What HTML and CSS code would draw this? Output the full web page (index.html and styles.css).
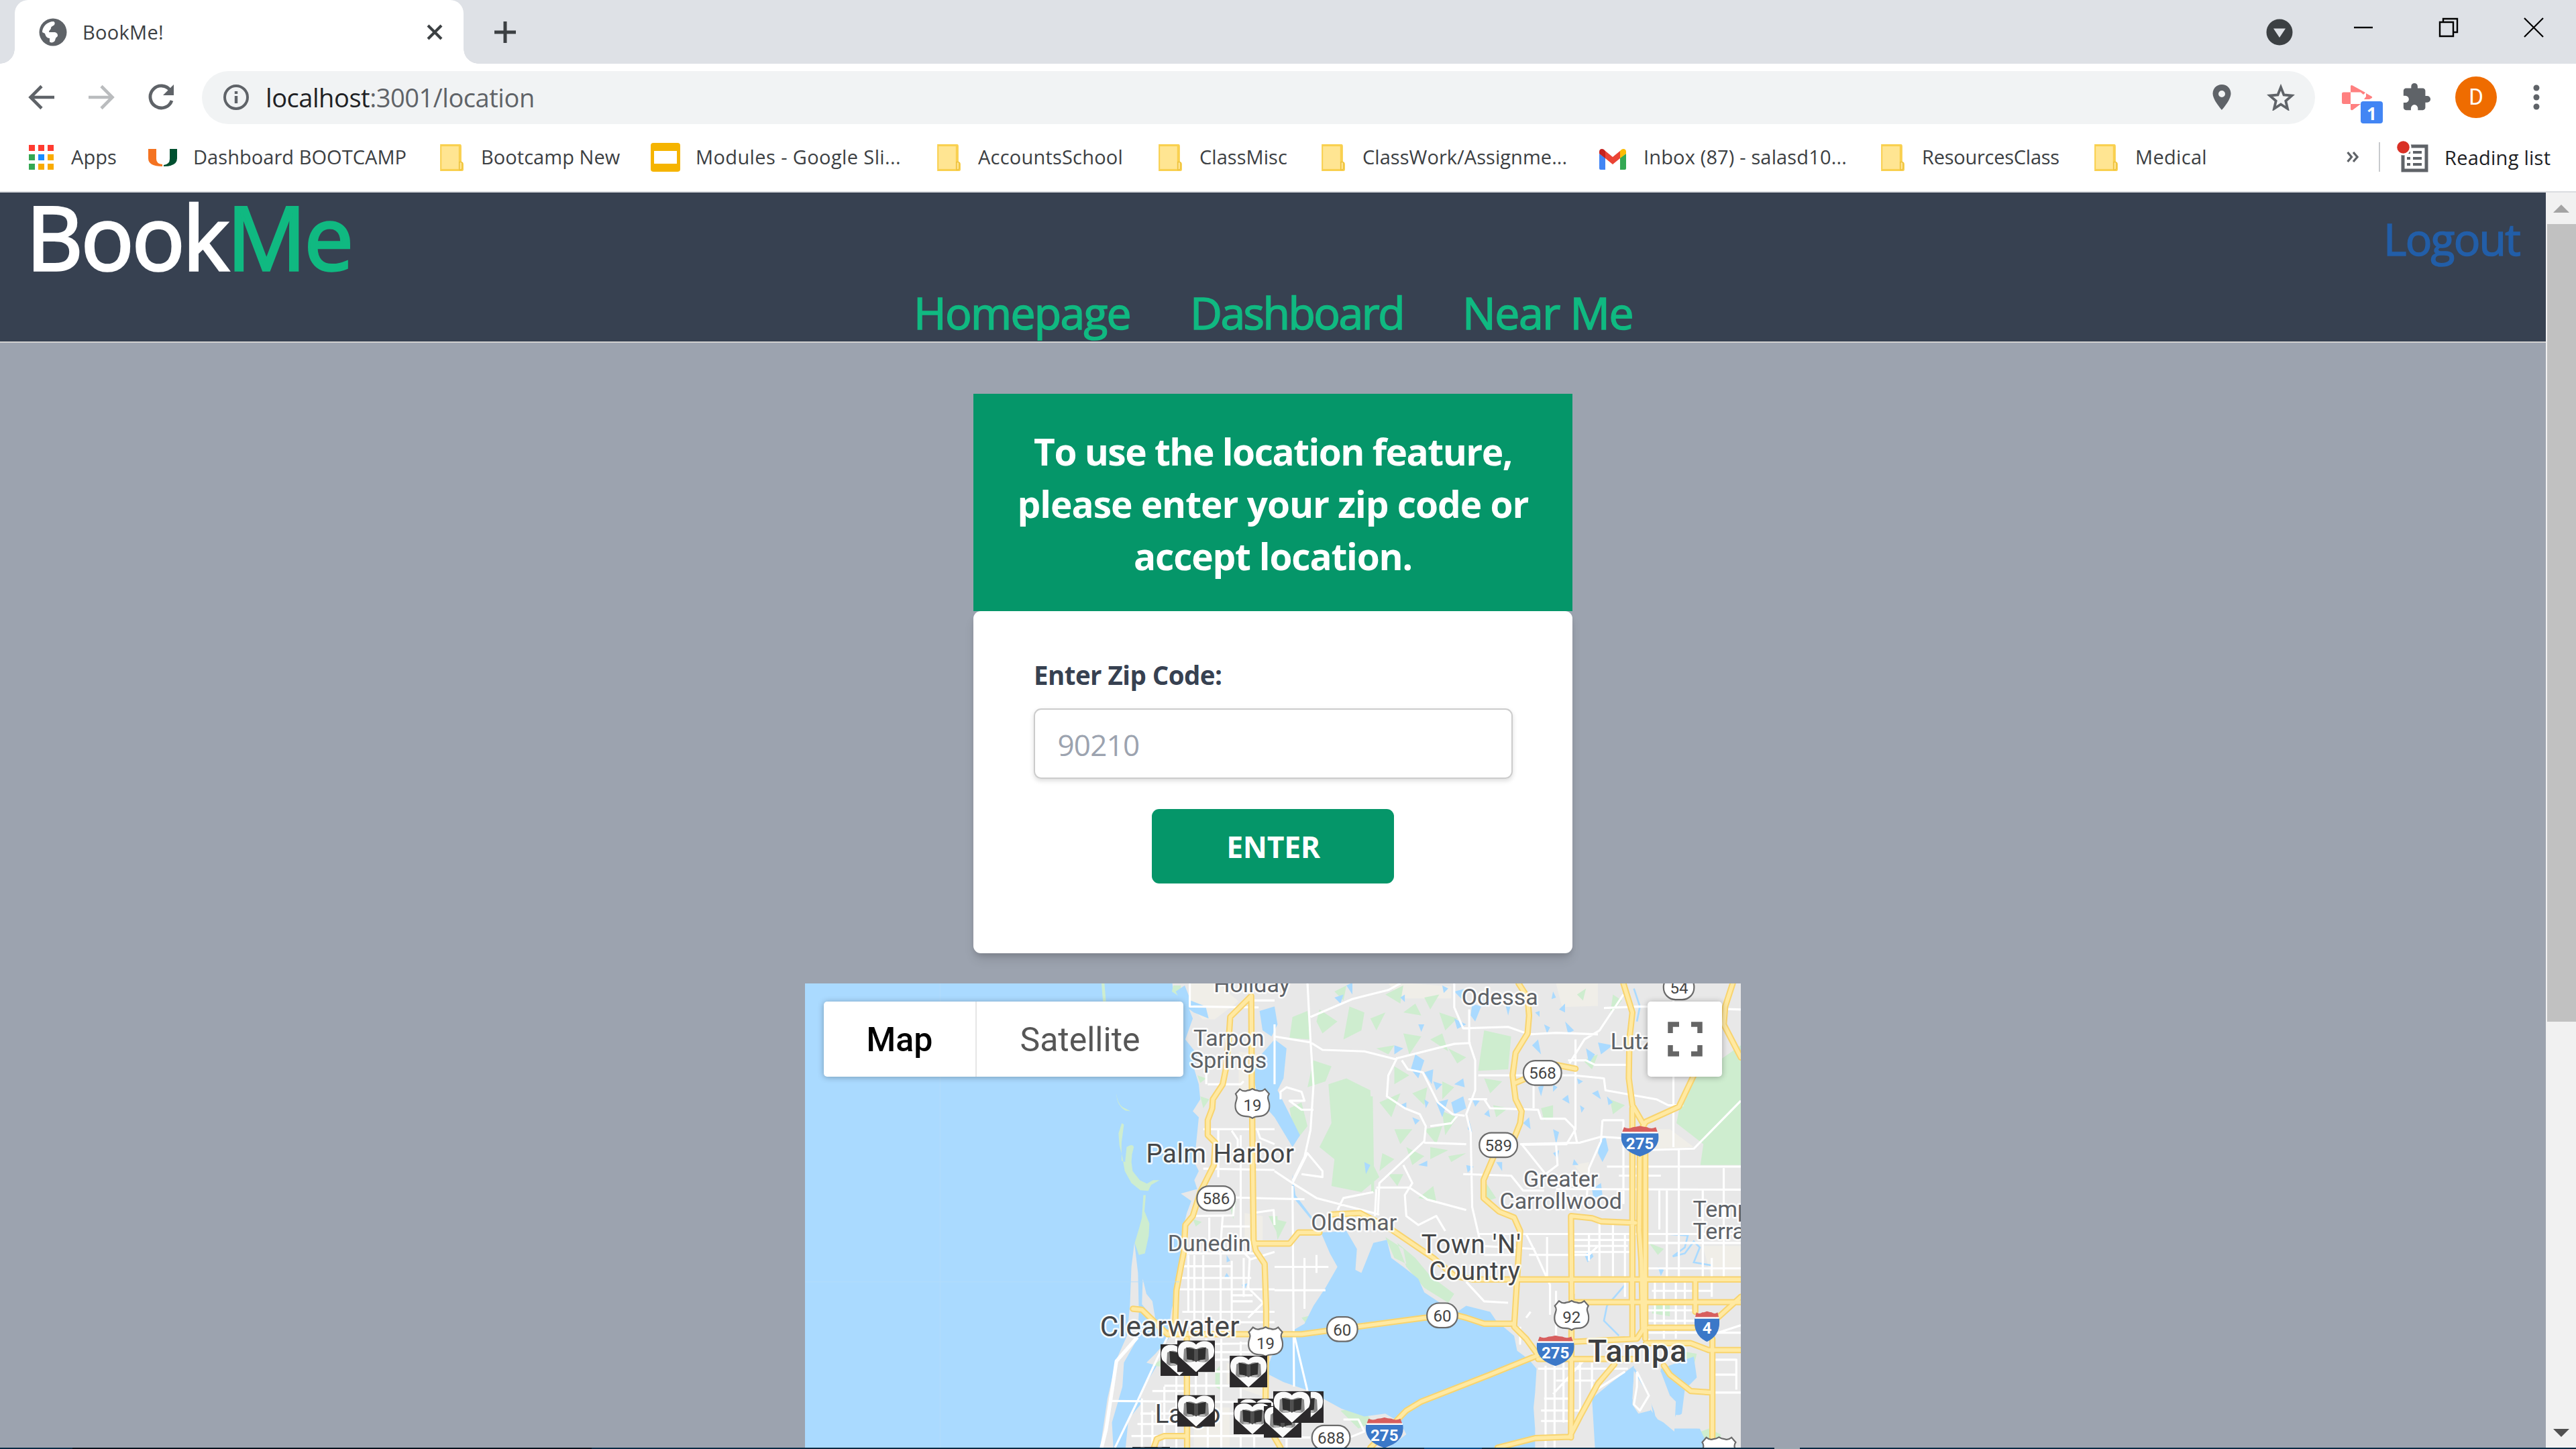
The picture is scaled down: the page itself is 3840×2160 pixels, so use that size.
FILE: index.html
```html
<!DOCTYPE html>
<html lang="en">
<head>
<meta charset="utf-8">
<title>BookMe!</title>
<link rel="stylesheet" href="styles.css">
</head>
<body>
<svg class="defs" width="0" height="0">
  <symbol id="folder" viewBox="0 0 36 42">
    <path d="M2 2h29q2 0 2 3v22q3 1 3 4v8q0 2-3 2H2z" fill="#f9d04f"/>
    <path d="M4 5h25v33H4z" fill="#ffe592"/>
    <path d="M30 28q4-1 4 2v7q0 2-4 2z" fill="#ffe592" stroke="#eec23c" stroke-width="1.5"/>
  </symbol>
</svg>

<header class="chrome">
  <div class="tabstrip">
    <div class="tab">
      <svg class="globe" viewBox="0 0 42 42"><circle cx="21" cy="21" r="20.5" fill="#5f6368"/><path d="M22 5c2 1 2 3 1 5-2 2-5 2-5 5 0 2-3 3-3 6h7c4 0 6 2 6 5 0 2-2 2-3 4-1 3-1 5-4 6-2 1-5 0-5-1v-5c-4 0-6-3-7-7l-4-2C5 13 12 5 22 5z" fill="#fff"/><path d="M33 9c4 4 5 9 4 14-1 5-4 9-8 11 2-3 3-6 3-9 0-4-3-5-5-7 0-2 4-3 5-5 1-1 1-3 1-4z" fill="#5f6368"/></svg>
      <span class="tab-title">BookMe!</span>
      <svg class="tab-close" viewBox="0 0 24 24"><path d="M2 2l20 20M22 2L2 22" stroke="#3c4043" stroke-width="4.2"/></svg>
    </div>
    <svg class="new-tab" viewBox="0 0 34 34"><path d="M17 1v32M1 17h32" stroke="#3c4043" stroke-width="5"/></svg>
    <div class="window-buttons">
      <svg class="tab-search" viewBox="0 0 40 40"><circle cx="20" cy="20" r="19.5" fill="#3c4043"/><path d="M11 14.5h18L20 28z" fill="#dee1e6"/></svg>
      <svg class="wb" viewBox="0 0 30 30"><path d="M1 15h28" stroke="#000" stroke-width="2.4"/></svg>
      <svg class="wb" viewBox="0 0 30 30"><path d="M2 7h20v21H2zM7 7V2h21v20h-6" fill="none" stroke="#000" stroke-width="2.4"/></svg>
      <svg class="wb" viewBox="0 0 30 30"><path d="M1 1l28 28M29 1L1 29" stroke="#000" stroke-width="2.2"/></svg>
    </div>
  </div>

  <div class="toolbar">
    <svg class="nav-icon" viewBox="0 0 40 40"><path d="M39 20H4M20 3.500L3.500 20 20 36.500" fill="none" stroke="#5f6368" stroke-width="4.600"/></svg>
    <svg class="nav-icon" viewBox="0 0 40 40"><path d="M1 20h35M20 3.500L36.500 20 20 36.500" fill="none" stroke="#babcbe" stroke-width="4.600"/></svg>
    <svg class="nav-icon" viewBox="0 0 40 40"><path d="M34 10A16.500 16.500 0 1 0 36 25" fill="none" stroke="#5f6368" stroke-width="4.800"/><path d="M39 1v16H23z" fill="#5f6368"/></svg>
    <div class="omnibox">
      <svg class="info" viewBox="0 0 40 40"><circle cx="20" cy="20" r="17" fill="none" stroke="#5f6368" stroke-width="4"/><path d="M20 18v11M20 11v4" stroke="#5f6368" stroke-width="4.400"/></svg>
      <span class="url"><b>localhost</b>:3001/location</span>
      <svg class="pin" viewBox="0 0 28 38"><path d="M14 0C6 0 .5 6 .5 13.500.5 23 14 38 14 38s13.500-15 13.500-24.500C27.500 6 22 0 14 0zm0 9a5 5 0 1 1 0 10 5 5 0 0 1 0-10z" fill="#5f6368" fill-rule="evenodd"/></svg>
      <svg class="star" viewBox="0 0 42 40"><path d="M21 5l4.500 11.500 12 1-9.200 8L31 37l-10-6.500L11 37l2.700-11.500-9.200-8 12-1z" fill="none" stroke="#5f6368" stroke-width="3.800"/></svg>
    </div>
    <div class="extension">
      <svg viewBox="0 0 64 60"><path d="M3 11.500h13V29H5.500Q3 29 3 26.500V13.500q0-2 2.500-2z" fill="#ff8080"/><path d="M16 3q0-3 3-1.500L38 12l-3 3-4-3.500H16zM39 13l8 4.500q2.500 1.500 0 3L44 22h-8l3-4zM16 29h15L19 38q-3 1-3-1.500z" fill="#ff8080"/></svg>
      <span class="badge">1</span>
    </div>
    <svg class="puzzle" viewBox="0 0 24 24"><path d="M20.500 11H19V7c0-1.100-.9-2-2-2h-4V3.500a2.500 2.500 0 0 0-5 0V5H4c-1.100 0-2 .9-2 2v3.800h1.500a2.700 2.700 0 0 1 0 5.400H2V20c0 1.100.9 2 2 2h3.800v-1.500a2.700 2.700 0 0 1 5.400 0V22H17c1.100 0 2-.9 2-2v-4h1.500a2.500 2.500 0 0 0 0-5z" fill="#5f6368"/></svg>
    <span class="avatar">D</span>
    <svg class="dots" viewBox="0 0 12 38"><g fill="#5f6368"><circle cx="6" cy="5" r="4.500"/><circle cx="6" cy="19" r="4.500"/><circle cx="6" cy="33" r="4.500"/></g></svg>
  </div>

  <nav class="bookmarks">
    <a class="bm apps"><svg viewBox="0 0 45 45"><g fill="#ff3b30"><path d="M2 4h9v9H2zM16 4h9v9h-9zM30 4h9v9h-9z"/></g><path d="M2 18h9v9H2zM2 32h9v9H2z" fill="#34a853"/><path d="M16 18h9v9h-9z" fill="#1a8cff"/><path d="M30 18h9v9h-9zM16 32h9v9h-9zM30 32h9v9h-9z" fill="#f9ab00"/></svg><span>Apps</span></a>
    <a class="bm brand boot"><svg viewBox="0 0 45 45"><path d="M1 10h12v15q0 7 9 8v3Q1 36 1 24z" fill="#f47321"/><path d="M33 10h11v14q0 12-20 12v-2q9-1 9-9z" fill="#005030"/></svg><span>Dashboard BOOTCAMP</span></a>
    <a class="bm new"><svg class="fold"><use href="#folder"/></svg><span>Bootcamp New</span></a>
    <a class="bm brand slides"><svg viewBox="0 0 45 45"><rect x="1" y="1" width="44" height="43" rx="4" fill="#f5b400"/><path d="M6 13h34v19H6z" fill="#fff"/></svg><span>Modules - Google Sli...</span></a>
    <a class="bm acc"><svg class="fold"><use href="#folder"/></svg><span>AccountsSchool</span></a>
    <a class="bm misc"><svg class="fold"><use href="#folder"/></svg><span>ClassMisc</span></a>
    <a class="bm work"><svg class="fold"><use href="#folder"/></svg><span>ClassWork/Assignme...</span></a>
    <a class="bm brand inbox"><svg viewBox="0 0 45 45"><path d="M2 17l9 6v18H4q-2 0-2-2z" fill="#4285f4"/><path d="M33 23l9-6v22q0 2-2 2h-7z" fill="#34a853"/><path d="M11 13l11 9 11-9v11l-11 9-11-9z" fill="#ea4335"/><path d="M2 17v-3c0-4 4-5 7-3l2 2v11z" fill="#c5221f"/><path d="M42 17v-3c0-4-4-5-7-3l-2 2v11z" fill="#fbbc04"/></svg><span>Inbox (87) - salasd10...</span></a>
    <a class="bm res"><svg class="fold"><use href="#folder"/></svg><span>ResourcesClass</span></a>
    <a class="bm med"><svg class="fold"><use href="#folder"/></svg><span>Medical</span></a>
    <svg class="more" viewBox="0 0 18 16"><path d="M1.500 1l6 7-6 7M10 1l6 7-6 7" fill="none" stroke="#5f6368" stroke-width="3.200"/></svg>
    <span class="rule"></span>
    <a class="reading"><svg viewBox="0 0 48 48"><path d="M9 8h35v36H9z" fill="none" stroke="#5f6368" stroke-width="5"/><path d="M24 17h13M24 26h13M24 35h13M15 26h5M15 35h5M15 17h5" stroke="#5f6368" stroke-width="4"/><circle cx="9.500" cy="9.500" r="12" fill="#fff"/><circle cx="9.500" cy="9.500" r="9.300" fill="#d93025"/></svg><span>Reading list</span></a>
  </nav>
</header>

<div class="viewport">
  <div class="page">
    <header class="site-header">
      <div class="brand-row">
        <h1 class="logo">Book<em>Me</em></h1>
        <a class="logout">Logout</a>
      </div>
      <nav class="site-nav">
        <a class="home">Homepage</a>
        <a class="dash">Dashboard</a>
        <a class="near">Near Me</a>
      </nav>
    </header>
    <main class="content">
      <h2 class="notice"><span class="line-1">To use the location feature,</span><span class="line-2">please enter your zip code or</span><span class="line-3">accept location.</span></h2>
      <form class="card">
        <label>Enter Zip Code:</label>
        <div class="field">90210</div>
        <button type="button">ENTER</button>
      </form>
      <section class="map">
        <svg class="map-canvas" viewBox="0 13 3125 1551" preserveAspectRatio="none">
          <defs>
            <symbol id="book" viewBox="0 0 168 142"><path d="M0 0h168v142H0z" fill="#2b292b"/><path d="M84 141L8 72C-6 38 8 3 44 3c20 0 33 6 40 16C91 9 104 3 124 3c36 0 50 35 36 69z" fill="#fafafa"/><path d="M30 38q26-18 54 2 30-20 54-2l3 48q-10 14-30 10-16 2-27-8-11 10-27 8-20 4-30-10z" fill="#8a8a8a"/><path d="M40 31l37 8v52l-34-8zM128 31l-37 8v52l34-8z" fill="#2f2f2f"/><path d="M77 38h14v54l-7 5-7-5z" fill="#505050"/><ellipse cx="56" cy="91" rx="13" ry="5" fill="#b5b5b5"/><ellipse cx="112" cy="91" rx="13" ry="5" fill="#b5b5b5"/></symbol>
            <symbol id="us" viewBox="0 0 120 104"><path d="M18 4Q30 14 42 9q10-1 18-6 8 5 18 6 12 5 24-5l14 16c-8 12-3 18 0 30 6 30-14 45-34 45q-14 0-22 6-8-6-22-6C18 95-2 80 4 50c3-12 8-18 0-30z" fill="#fff" stroke="#6b6b6b" stroke-width="5"/></symbol>
            <symbol id="inter" viewBox="0 0 126 102" preserveAspectRatio="none"><path d="M2 22h122c8 38-14 66-61 80C16 88-6 60 2 22z" fill="#3b78c8"/><path d="M10 4q14 8 30 0 12 0 23-4 11 4 23 4 16 8 30 0l6 16H4z" fill="#d75f5f"/><path d="M2 20h122v5H2z" fill="#fff"/></symbol>
            <path id="hw" d="M1490 55L1420 125l-5 75-10 100-10 50-33 50-2 30-15 40v50l25 25-5 75-45 90-25 80-25 30-5 90-10 50-15 80-4 110-21 35M1490 55l2 285 6 530 7 35 30 45 5 150v100l-2 200M1095 1100l30 3 85 82h448l410-55 110-8 30 8 60 20h100M1275 1200l1 364M1165 1564l10-29 25-10h76M1500 882h118l30-37h70M1758 785l95-5 105 55 140 95 70 60 60 12h897M2383 13l30 47 5 60-5 60-40 65-10 75 10 80 20 40-5 40-20 50-55 30-47 110v60l52 45 50 20 20 45-10 160-10 160 40 40 40 55M2373 345l35-15M2508 285l65 13M3098 13l-25 77-5 60 57 110M2733 13l30 97-10 90-2 130 12 90 35 60M2968 320l-50 105-110 50-15 25M2763 430v770M2788 560l-2 280 7 100 5 230-20 30-210 10M2806 500v700M2558 790l70 7 30 11 115 5M2558 790l2 270-2 470M2568 1078h557M2818 1163h150M3125 1060l-77 70M2973 1002v108M2808 1215h150l60 23h107M3030 1200v364M2868 1290l20 30 70 55 72 5M2448 1255l-160 65-230 90-50 30-120 124M2703 1285l-55 65-60 110-35 68-115 4-125 32M2448 1268h320M2761 1002v78M1568 1530l20 34"/>
          </defs>
          <path class="water" d="M0 0h3125v1570H0z"/>
          <path class="land" d="M1225 0l5 40 45 40 20 50-25 70 40 50-10 50 15 50 5 50-25 40 20 20-10 100-10 40 20 40-15 30 10 30-55 15 35 25-15 40-10 40-10 60 5 40-15 60-10 80-10 40-10 60v40l-45 50-30 30 35 10-55 90v40l-40 50-10 100h2060V0zM1100 880l12 100 3 130-5 90-45 80-5 80-35 120 5 90h-45l25-170 30-130 35-80 10-100 5-130zM1128 1000l12 50 20 25 10 60-20-20-25-30z"/>
          <path class="green" d="M990 13h10l5 60h-10zM1040 380q2 32 20 46l28 14-18-2q-30-18-30-58zM1058 480l7 5-8 60v60l12 5 5-50q20-14 24 0l-6 24-2 26 4 30 24 30 24 12 20-12 22 0-28 16-10 20-26-2-30-24-22-40-8-46-10-40-3-40zM1130 720h8l-4 50-10 40zM1132 770l18 45-2 40-13 60-20 5-14-40 15-50zM1230 20h25v40l-30-20zM1160 1290l50-35v40zM1310 320l30 10-20 15zM1320 390l30 10-20 30zM1295 800l30 10-20 15zM1370 1310l15-20v80l-15-10zM1420 760l20-20-10 60z"/>
          <g transform="translate(1568 0)">
            <path class="beige" d="M380 13h80l130 10v40H420zM940 13h140v75l-120 4zM1250 500h70l80 60-130 5zM1430 890h127v100h-100zM1000 620l50-10-10 60zM-280 13h90l70 60-80 60h-40l-40-40zM-120 240l60 10v160l-60-20zM-100 780l60 10v100h-60zM-160 1280l140 60v60l-140-50zM-270 1430h120v130h-120z"/>
            <path class="green" d="M180 350l60-20 80 40 10 250 20 40-60 50-100-20 10-90-50-40 40-80zM60 125l50-20 10 95-70-5zM700 170l90 20-10 110-100 5 10-70zM1400 330l157-110v400h-135l10-70-90-70 10-50zM150 100l60 40-50 40-20-40zM250 90l50 20-10 60-60 30zM370 50l60-30-10 60zM500 60l50-10-30 50zM550 110l60 20-40 40zM130 270l60 20-20 50-60 20zM340 230l60-10-20 30zM430 110l40-30 20 40zM350 410l70-30-30 80zM580 230l60 30-30 20zM500 500l60-10-20 60zM520 560l60 10-60 30zM440 560l60 30-40 30zM360 580l40 20-50 40zM580 590l60-10-50 30zM480 730l50-40 10 50zM700 670l40 60-30 10zM750 540l30 30-40-10zM890 430l40-10v40l-30 10zM1030 270l50-20-20 50zM1120 400l50 20-40 30zM1010 50l30-20-10 40zM1130 50l30 20-40 50zM410 880l60 50 50 60 80 60-20 30-80-50-60-70zM370 860l30 70 40 20-10-50zM220 1440l70-10 40 50-50 20zM90 1130l60-15-40 40zM1250 880l50 20-20 20zM1270 1070l50 15v40l-60-10zM1350 1240l60 10-10 40zM1400 1520l50-20 40 20v44h-80zM0 300l20-40 10 60zM50 430l40-20 20 80-40 50zM0 800l40 10-30 60zM320 390l8 0 5 320h-10zM200 40l40-20-10 50zM320 130l50-20-30 60zM430 180l60 10-40 60zM520 200l40-20 20 60zM400 290l50 30-50 30zM460 380l50-20-10 60zM560 340l40 20-40 40zM400 500l60 0-40 50zM700 330l60 10-40 40zM730 420l50 10-40 30zM560 440l50 20-40 60zM380 650l50 0-20 40zM-20 790l30 0 0 60z"/>
            <path class="water" d="M155 845l30 70 25 45-40 70-40 60-30 60-70 40-40 70-20 54 60 31 82 28 112 61 76 26 70-10 50 30 20 40-60 44h490v-64l-5-70 5-50 5-80-25-30-40-30-10-50-60-50-20-30-80-20-30 20-50-25-60-40-20-45-50-40-40-30-15-60-45 10-20 50-20 50-20-10 5-70-35-60zM1070 1564l-10-164 60-50 80-60v30l-5 80 15 40 40-10 30 40 40 20 100 10 30 64zM1290 1300l110-40 10 70-40 40-10 80-30 20-50-90zM0 200l40 30-10 100-20 40 40 80 35 70-25 40-60-100-53-60-20-80 20-60zM-50 105l50-15 10 60-20 40-30-20zM-330 40l30-20 20 50 50 20 10 40-50-20-40-30z"/>
            <path class="water" d="M600 40l40-10-10 40zM660 80l30 10-20 50-15-20zM200 60l30-10-10 30zM240 20l20-10v40zM470 250l30 20-20 60-25-30zM400 220l30 10-30 20zM500 310l30-10-5 50zM540 410l40-10-20 60zM590 410l40-20 10 40-40 20zM530 340l30 10-20 20zM600 350l30-20 5 30zM690 90l15-30 10 30zM770 80l20 0-10 40zM860 220l20-20 10 50zM880 360l20-10-10 40zM950 100l20-20v30zM970 140l30 30-20 10zM900 150l20 10-10 20zM1080 210l50 10-40 30zM1040 230l30 20-20 30zM830 480l20-20 5 40zM930 500l20 10-10 40zM960 400l20-15 5 30zM1060 380l20-10 10 30zM1110 390l20 20-15 10zM1085 540l20-15 10 45-20 40-15-30zM1060 700l30-20 5 40-30 10zM650 470l10 40-15-10zM640 620l25 5-20 20zM480 620l30-15v20zM300 610l20 10-15 30zM1035 920l20-15 10 20-20 20zM930 580l20-10-5 30zM1000 600l15 20-20 0zM60 650l10 70 60 80-5 5-65-80zM740 610l20 0v30zM1280 960l20 10-10 20zM600 130l40 20-30 15zM-160 980l10 15-20 5zM-110 1020l20-5-10 20zM-160 920l12 20-12 5zM420 60l15-10v25zM560 20l20 10-15 15zM480 150l20 0-10 25zM420 420l20-10v25zM460 460l25 10-15 15zM500 400l15 10-10 20zM660 400l25 5-15 20zM700 450l15-15 5 25zM900 290l20 0-10 15zM930 350l15 10-15 15zM1010 330l20 10-15 10zM1020 420l15 10-10 15zM870 110l15-5v20zM930 40l10 20-15 5z"/>
            <path class="stream" d="M1310 850l70 5-10 40-40 30 40-10 30-40 20 20-20 50 60 10M1170 1020l-60 70-10 50 50 50M1200 1300l60 110 10 60M1200 30l20 60-10 50"/>
            <path class="land" d="M1200 1310l50 80 5 50-40 10-20-30zM1290 1310l30 80 20 20-5 100-60-50-40-100zM1340 1455h110v45h-125z"/>
          </g>
          <path class="minor" d="M1285 0v90l230 3M1345 350h110l10-10M1340 310v40M1330 500h238M1380 500v160M1455 520v380M1330 632l238 4M1300 790l130-2 5-60 133 4M1260 915h240M1280 920v190M1300 920v240M1330 920v240M1388 915v250M1425 940v220M1465 930v130M1250 958h175M1250 997h240M1245 1035h323M1425 1055h70M1425 1075h70M1260 1110h308M1270 1145h298M1395 825h90M1395 790l-10 130M1568 910l-80 25-30-30M1485 930l-5 100 60 60M1480 1130l60-60M1350 795v110M1425 505l20 30v50M1510 500l10 30 48 20M1495 780l70-10 3 50M1568 350v-200M1500 70h68M1210 1195L1165 1290l-60 130-70 144M1210 1220l320-5M1240 1245h330M1240 1270h300M1220 1310h320M1200 1357h340M1160 1375h110M1120 1450h450M1110 1485h160M1090 1525h478M1020 1408l570 5M1240 1200v364M1340 1200v200M1390 1200v364M1345 1420v144M1305 1210v190M1455 1210v354M1125 1400v164M1160 1440v124M1200 1360v200M1500 1420v144"/>
          <path class="beachroad" d="M1110 1195l-70 80-15 100-20 130-15 60"/>
          <path class="minor" transform="translate(1568 0)" d="M110 13l10 190 10 150-10 150-20 90-40 80M0 190l120 20 40 25 140 5 100 25 200-50 55-3M120 125l140-60 120-30 40-22M410 260l-30 60-5 70 60 40 50 20 20 40-5 50-150 140-5 100M425 270l20 30 50 10 50 100 50 40 40 5M600 13v80l30 70 150-5 70 25 90-5 140 5M650 100v110l20 60v100l-30 80 15 60 5 250 30 130 180 10M520 490l70-10 20-25M500 545l140 5M340 695h110l60 40 130 35M430 620l30 60-25 40 5 70 40 30 60-30 30 50M210 770l20-40 100-20M0 640l60 40 80 50 210 55M60 690l5 670M0 732l100 2M60 680l50-100 50 60v20l-70-10M680 320h320l100 10 5 40 170 30 40 20h50M710 400h-60l50 0 20 30 160 5 10 30h80l30 30 10 50M1165 50l-80 120-50 30-50 80M1005 200v300l-30 50-140 2M865 350v80M1100 95l120-5 337 10M980 270h60l30 15h120M1332 60v500M820 550l200-5 70-20 70 5M1095 470h70v280M1095 470l-5 70-40 90-10 130M940 550l5 70-40 30-80-100M630 650l160 5 40 50h70M1110 625h447M1150 655l140 0M1240 570l160-5 157-160M940 700l617 2M1310 700v300M1350 570v440M1285 705v130M1500 630v370M1430 700v300M820 850h737M1000 870h200M1000 890h180M1000 910h190M840 850l30 60 50 110v100M910 860v140M850 920h200l30-30M1050 850v90M1085 810v190M1130 810v190M1170 850v210M1240 880h317M1240 965h317M1260 1040h200M1270 1010v150M1300 1010v190M1340 1010v190M1370 1010v150M1460 930v130M1240 1105h170M1240 1140h180M1240 1180h317M1250 1200v80M1480 1180l77-25M640 1010l60 65 80 5M680 850h130M700 920h110M340 700l-5 90M0 1038h170M0 960h180M100 930v170M140 920v60M65 1185l45 190M880 1300h300M940 1340h130M900 1400h90M890 1440h150M890 1475h100M905 1290v274M935 1280v284M965 1280v200M1020 1270v190M1060 1280v90M1040 1265l-110 120M1170 1310l-110 70M1210 1310v50l-10 60 20 20 30-50-40-80M1462 1270h80v100M1470 1320h70M1470 1380h87M820 1160v60M840 1130l15-20M940 1040v150M1000 1050v-40M230 1470l50 0 20 40-50 20M40 1480v84M0 1530h120M20 400l0-25 20-15 50 15 10 30-50 0 40 30 40 0"/>
          <use href="#hw" class="casing"/>
          <use href="#hw" class="core"/>
          <path class="seam" d="M451 13v1551M0 1010h1250"/>
          <g class="shields">
            <use href="#us" x="1434" y="362" width="120" height="104"/>
            <use href="#us" x="1478" y="1158" width="120" height="104"/>
            <use href="#us" x="2500" y="1070" width="120" height="104"/>
            <use href="#us" x="2992" y="1526" width="120" height="104"/>
            <rect x="1309" y="690" width="127" height="82" rx="40"/>
            <rect x="2867" y="-15" width="102" height="82" rx="40"/>
            <rect x="2399" y="271" width="127" height="82" rx="40"/>
            <rect x="2252" y="512" width="127" height="82" rx="40"/>
            <rect x="1743" y="1127" width="102" height="82" rx="40"/>
            <rect x="2077" y="1081" width="102" height="82" rx="40"/>
            <rect x="1693" y="1490" width="127" height="82" rx="40"/>
            <use href="#inter" x="2725" y="489" width="126" height="102"/>
            <use href="#inter" x="2443" y="1189" width="126" height="102"/>
            <use href="#inter" x="1872" y="1463" width="126" height="102"/>
            <use href="#inter" x="2970" y="1108" width="84" height="102"/>
          </g>
          <g class="route">
            <text x="1494" y="438">19</text><text x="1538" y="1235">19</text><text x="2560" y="1147">92</text>
            <text x="1373" y="751">586</text><text x="2919" y="46">54</text><text x="2463" y="332">568</text><text x="2316" y="573">589</text>
            <text x="1794" y="1189">60</text><text x="2128" y="1142">60</text><text x="1757" y="1551">688</text>
          </g>
          <g class="route inter">
            <text x="2788" y="567">275</text><text x="2506" y="1267">275</text><text x="1935" y="1541">275</text><text x="3012" y="1184">4</text>
          </g>
          <g class="town">
            <text x="1492" y="42">Holiday</text><text x="2320" y="85">Odessa</text>
            <text x="1415" y="221">Tarpon</text><text x="1414" y="295">Springs</text><text class="from" x="2690" y="233">Lutz</text>
            <text x="1350" y="907">Dunedin</text><text x="1833" y="837">Oldsmar</text>
            <text x="2524" y="692">Greater</text><text x="2524" y="767">Carrollwood</text>
            <text class="from" x="2965" y="792">Temple</text><text class="from" x="2965" y="867">Terrace</text>
          </g>
          <g class="city">
            <text x="1386" y="611" textLength="494">Palm Harbor</text>
            <text x="2224" y="915" textLength="332">Town 'N'</text><text x="2236" y="1004" textLength="304">Country</text>
            <text x="1278" y="1480">Largo</text>
          </g>
          <text class="big" x="1218" y="1191" textLength="466">Clearwater</text>
          <text class="metro" x="2779" y="1276" textLength="330">Tampa</text>
          <g>
            <use href="#book" x="1187" y="1218" width="126" height="106"/><use href="#book" x="1243" y="1206" width="126" height="106"/>
            <use href="#book" x="1418" y="1257" width="126" height="106"/><use href="#book" x="1243" y="1388" width="126" height="106"/>
            <use href="#book" x="1445" y="1400" width="126" height="106"/><use href="#book" x="1431" y="1414" width="126" height="106"/>
            <use href="#book" x="1532" y="1425" width="126" height="106"/><use href="#book" x="1606" y="1375" width="126" height="106"/>
            <use href="#book" x="1563" y="1375" width="126" height="106"/><use href="#book" x="1093" y="1561" width="126" height="106"/>
          </g>
        </svg>
        <div class="map-type"><span class="active">Map</span><span>Satellite</span></div>
        <div class="fullscreen"><svg viewBox="0 0 52 52"><path d="M4 17V4h13M35 4h13v13M48 35v13H35M17 48H4V35" fill="none" stroke="#666" stroke-width="7.500"/></svg></div>
      </section>
    </main>
  </div>
  <aside class="scrollbar">
    <svg class="arrow" viewBox="0 0 24 12"><path d="M0 12L12 0l12 12z" fill="#a3a3a3"/></svg>
    <span class="thumb"></span>
    <svg class="arrow down" viewBox="0 0 24 12"><path d="M0 0l12 12L24 0z" fill="#505050"/></svg>
  </aside>
</div>
<div class="taskbar"></div>
</body>
</html>
```
FILE: styles.css
```css
* { box-sizing: border-box; }
body { margin: 0; width: 3840px; height: 2160px; overflow: hidden; display: flex; flex-direction: column; font-family: "Open Sans", "Noto Sans", sans-serif; }
svg { display: block; flex: none; }
.defs { position: absolute; }
span, a { white-space: nowrap; }

/* browser frame */
.chrome { flex: none; height: 287px; background: #fff; border-bottom: 2px solid #dadce0; }
.tabstrip { height: 95px; background: #dee1e6; display: flex; align-items: center; padding-left: 22px; }
.tab { position: relative; width: 669px; height: 95px; background: #fff; border-radius: 20px 20px 0 0; display: flex; align-items: center; padding-left: 36px; }
.tab::before, .tab::after { content: ""; position: absolute; bottom: 0; width: 22px; height: 22px; }
.tab::before { left: -22px; background: radial-gradient(circle at 0 0, transparent 21.500px, #fff 22px); }
.tab::after { right: -22px; background: radial-gradient(circle at 100% 0, transparent 21.500px, #fff 22px); }
.globe { width: 42px; height: 42px; }
.tab-title { width: 513px; margin-left: 23px; font-size: 29px; letter-spacing: .3px; color: #3c4043; }
.tab-close { width: 24px; height: 24px; }
.new-tab { width: 34px; height: 34px; margin-left: 45px; }
.window-buttons { margin-left: auto; display: flex; padding-right: 48px; }
.tab-search { width: 40px; height: 40px; margin: 0 90px 0 0; }
.wb { width: 30px; height: 30px; margin-right: 97px; margin-top: -2px; }
.wb:last-child { margin-right: 0; }

.toolbar { height: 99px; display: flex; align-items: center; padding-left: 42px; }
.toolbar > * { flex: none; }
.nav-icon { width: 40px; height: 40px; margin-right: 49px; }
.omnibox { width: 3150px; height: 79px; margin-left: -8px; margin-top: 1px; background: #f1f3f4; border-radius: 40px; display: flex; align-items: center; padding-left: 31px; }
.info { width: 40px; height: 40px; }
.url { flex: none; width: 2902px; margin-left: 24px; font-size: 38px; line-height: 79px; letter-spacing: -.450px; color: #5f6368; }
.url b { font-weight: 400; color: #202124; }
.pin { width: 28px; height: 38px; }
.star { width: 42px; height: 40px; margin-left: 53px; }
.extension { position: relative; width: 64px; height: 60px; margin: 22px 0 0 37px; }
.extension svg { width: 64px; height: 60px; }
.badge { position: absolute; left: 31px; top: 25px; width: 33px; height: 33px; border-radius: 4px; background: #4285f4; color: #fff; font: 700 26px/36px "Noto Sans", sans-serif; text-align: center; }
.puzzle { width: 46px; height: 46px; margin-left: 27px; }
.avatar { width: 62px; height: 62px; margin-left: 35px; border-radius: 50%; background: #ef6c00; color: #fff; font: 33px/62px Roboto, sans-serif; text-align: center; }
.dots { width: 12px; height: 38px; margin-left: 53px; }

.bookmarks { height: 80px; display: flex; align-items: center; padding-left: 41px; }
.bm { display: flex; align-items: center; gap: 20px; margin-right: 42px; font-size: 29px; line-height: 40px; letter-spacing: .05px; color: #3c4043; }
.bm.brand { gap: 23px; margin-right: 43px; }
.bm svg { width: 45px; height: 45px; }
.bm .fold { padding: 1px 6px 1px 2px; }
.apps span { width: 72px; }
.boot span { width: 321px; }
.new span { width: 210px; }
.slides span { width: 313px; letter-spacing: .39px; }
.acc span { width: 223px; letter-spacing: .21px; }
.misc span { width: 136px; }
.work span { width: 309px; letter-spacing: .05px; }
.inbox span { width: 307px; letter-spacing: .15px; }
.res span { width: 211px; letter-spacing: -.25px; }
.med span { width: 315px; letter-spacing: .32px; }
.med { margin-right: 0; }
.more { width: 18px; height: 16px; }
.rule { width: 2px; height: 44px; margin-left: 30px; background: #c8cacd; }
.reading { display: flex; align-items: center; margin-left: 25px; font-size: 29px; letter-spacing: .25px; color: #202124; }
.reading svg { width: 48px; height: 48px; margin-right: 23px; }

/* web page */
.viewport { flex: 1; display: flex; min-height: 0; }
.page { width: 3795px; background: #9ca3af; }
.site-header { height: 224px; background: #374151; border-bottom: 2px solid #d1d1d1; }
.brand-row { display: flex; justify-content: space-between; height: 130px; padding: 0 39px 0 39px; }
.logo { margin: 0; font-size: 131px; line-height: 130px; font-weight: 400; letter-spacing: -2.900px; color: #fff; -webkit-text-stroke: 3.500px currentColor; }
.logo em { font-style: normal; color: #10b981; }
.logout { font-size: 66px; line-height: 137px; letter-spacing: -1.780px; color: #225ea8; -webkit-text-stroke: 1.600px currentColor; }
.site-nav { display: flex; padding-left: 1362px; font-size: 66px; line-height: 96px; color: #10b981; -webkit-text-stroke: 1.600px currentColor; }
.home { width: 412px; letter-spacing: -1.690px; }
.dash { width: 406px; letter-spacing: -2.510px; }
.near { letter-spacing: -1.420px; }
.content { display: flex; flex-direction: column; align-items: center; padding-top: 76px; }
.notice { width: 893px; height: 324px; margin: 0; padding-top: 47px; background: #059669; color: #fff; font-size: 55px; line-height: 78px; font-weight: 700; display: flex; flex-direction: column; align-items: center; }
.line-1 { letter-spacing: -1.500px; }
.line-2 { letter-spacing: -1.040px; }
.line-3 { letter-spacing: -1.200px; }
.card { width: 893px; height: 510px; padding: 75px 90px 0; background: #fff; border-radius: 11px; box-shadow: 0 11px 17px -3px rgba(0,0,0,.12), 0 5px 7px -1px rgba(0,0,0,.1); display: flex; flex-direction: column; align-items: center; }
.card label { width: 100%; font-size: 38.500px; line-height: 40px; font-weight: 700; letter-spacing: -.550px; color: #374151; }
.field { width: 714px; height: 105px; margin-top: 30px; padding: 2px 0 0 34px; border: 2px solid #ccc; border-radius: 11px; box-shadow: 0 3px 7px rgba(0,0,0,.14); font-size: 44px; line-height: 101px; letter-spacing: -.8px; color: #9ca3af; }
.card button { width: 361px; height: 111px; margin-top: 45px; border: 0; border-radius: 11px; background: #059669; color: #fff; font: 700 44.500px/111px "Open Sans", sans-serif; letter-spacing: -.3px; padding: 0 0 0 1px; }
.map { position: relative; width: 1395px; height: 692px; margin-top: 45px; overflow: hidden; }
.map-canvas { width: 1395px; height: 692px; }
.map-type { position: absolute; left: 28px; top: 27px; width: 536px; height: 112px; display: flex; background: #fff; border-radius: 5px; box-shadow: 0 1px 10px rgba(0,0,0,.3); font: 50px/115px Roboto, sans-serif; color: #565656; text-align: center; }
.map-type span { flex: 1; }
.map-type .active { flex: none; width: 228px; border-right: 2px solid #e6e6e6; font-weight: 500; color: #000; }
.fullscreen { position: absolute; left: 1256px; top: 27px; width: 111px; height: 112px; background: #fff; border-radius: 5px; box-shadow: 0 1px 10px rgba(0,0,0,.3); display: flex; align-items: center; justify-content: center; }
.fullscreen svg { width: 52px; height: 52px; }

.water { fill: #aadaff; }
.land { fill: #e8e8e8; }
.green { fill: #ceedcf; }
.beige { fill: #f0eee8; }
.stream { fill: none; stroke: #aadaff; stroke-width: 6; }
.minor, .beachroad { fill: none; stroke: #fff; stroke-width: 7; stroke-linejoin: round; }
.beachroad { stroke-width: 12; }
.casing, .core { fill: none; stroke-linejoin: round; stroke-linecap: round; }
.casing { stroke: #f8d46f; stroke-width: 21; }
.core { stroke: #ffe9a2; stroke-width: 12; }
.seam { fill: none; stroke: #b4dcfa; stroke-width: 2; }
.shields rect { fill: #fff; stroke: #6b6b6b; stroke-width: 5; }
.map-canvas text { font-family: Roboto, sans-serif; text-anchor: middle; paint-order: stroke; stroke: #fff; stroke-opacity: .85; stroke-width: 12px; stroke-linejoin: round; fill: #5d6166; font-size: 76px; }
.map-canvas .from { text-anchor: start; }
.map-canvas .city text { font-size: 86px; fill: #444648; }
.map-canvas .big { font-size: 95px; fill: #444648; }
.map-canvas .metro { font-size: 104px; font-weight: 500; fill: #3c3e40; }
.map-canvas .route text { font-size: 54px; stroke: none; fill: #444; }
.map-canvas .inter text { fill: #fff; font-weight: 700; }

.scrollbar { width: 45px; background: #f1f1f1; display: flex; flex-direction: column; align-items: center; padding-top: 18px; }
.arrow { width: 24px; height: 12px; }
.thumb { width: 43px; height: 1189px; margin: 17px 0 0 2px; background: #c1c1c1; }
.down { margin-top: 607px; }
.taskbar { flex: none; height: 2px; background: linear-gradient(90deg, #0a2a43 0 108px, #03101c 108px 882px, #0a2a43 882px 2123px, #064a85 2123px 2209px, #0a2a43 2209px 2645px, #9aa6b0 2645px 2683px, #0a2a43 2683px); }
```
